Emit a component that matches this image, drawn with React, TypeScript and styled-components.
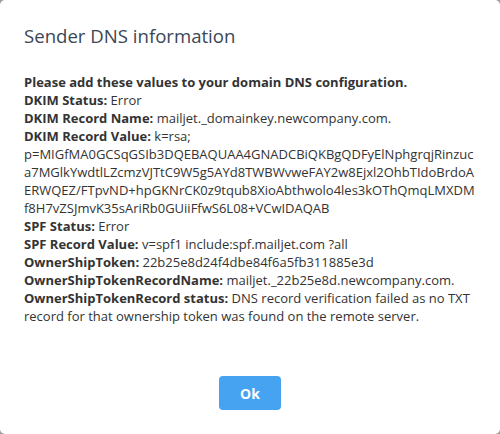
import React from "react";
import styled, { createGlobalStyle } from "styled-components";

const GlobalStyle = createGlobalStyle`
  html, body {
    margin: 0;
    padding: 0;
    background: #9a9a9a;
  }
  * {
    box-sizing: border-box;
  }
`;

const Modal = styled.div`
  width: 500px;
  height: 434px;
  background: #ffffff;
  border-radius: 5px;
  padding: 22px 24px 0;
  font-family: "Open Sans", "Noto Sans", sans-serif;
  display: flex;
  flex-direction: column;
`;

const Title = styled.h2`
  margin: 0;
  font-size: 18.6px;
  font-weight: 400;
  line-height: 28px;
  color: #3b4656;
`;

const Body = styled.div`
  margin-top: 23px;
  font-size: 13px;
  line-height: 18px;
  color: #333333;
  overflow-wrap: anywhere;
`;

const Row = styled.div<{ $strong?: boolean }>`
  font-weight: ${(p) => (p.$strong ? 700 : 400)};
`;

const Label = styled.b`
  font-weight: 700;
`;

const Footer = styled.div`
  display: flex;
  justify-content: center;
  margin-top: 51px;
`;

const OkButton = styled.button`
  width: 62px;
  height: 34px;
  border: none;
  border-radius: 4px;
  background: #46a3f1;
  color: #ffffff;
  font-family: "Open Sans", "Noto Sans", sans-serif;
  font-size: 14px;
  font-weight: 700;
  cursor: pointer;
`;

const records: [string, string][] = [
  ["DKIM Status", "Error"],
  ["DKIM Record Name", "mailjet._domainkey.newcompany.com."],
  [
    "DKIM Record Value",
    "k=rsa; p=MIGfMA0GCSqGSIb3DQEBAQUAA4GNADCBiQKBgQDFyElNphgrqjRinzuca7MGlkYwdtlLZcmzVJTtC9W5g5AYd8TWBWvweFAY2w8Ejxl2OhbTIdoBrdoAERWQEZ/FTpvND+hpGKNrCK0z9tqub8XioAbthwolo4les3kOThQmqLMXDMf8H7vZSJmvK35sAriRb0GUiiFfwS6L08+VCwIDAQAB",
  ],
  ["SPF Status", "Error"],
  ["SPF Record Value", "v=spf1 include:spf.mailjet.com ?all"],
  ["OwnerShipToken", "22b25e8d24f4dbe84f6a5fb311885e3d"],
  ["OwnerShipTokenRecordName", "mailjet._22b25e8d.newcompany.com."],
  [
    "OwnerShipTokenRecord status",
    "DNS record verification failed as no TXT record for that ownership token was found on the remote server.",
  ],
];

export default function App() {
  return (
    <>
      <GlobalStyle />
      <Modal>
        <Title>Sender DNS information</Title>
        <Body>
          <Row $strong>Please add these values to your domain DNS configuration.</Row>
          {records.map(([label, value]) => (
            <Row key={label}>
              <Label>{label}:</Label> {value}
            </Row>
          ))}
        </Body>
        <Footer>
          <OkButton>Ok</OkButton>
        </Footer>
      </Modal>
    </>
  );
}
